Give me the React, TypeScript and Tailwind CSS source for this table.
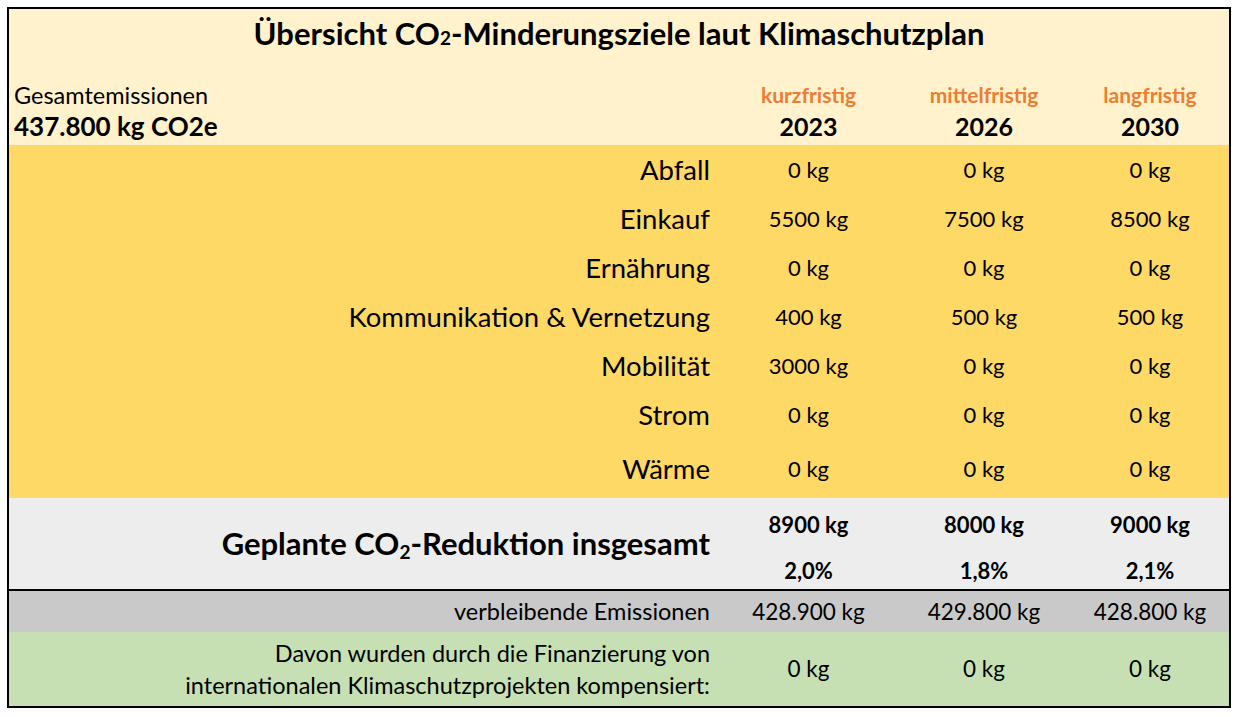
import React from "react";

const COLS = "grid grid-cols-[711px_177px_174px_158px]";

const rows = [
  { label: "Abfall", v: ["0 kg", "0 kg", "0 kg"], h: "h-[49px]" },
  { label: "Einkauf", v: ["5500 kg", "7500 kg", "8500 kg"], h: "h-[49px]" },
  { label: "Ernährung", v: ["0 kg", "0 kg", "0 kg"], h: "h-[49px]" },
  { label: "Kommunikation & Vernetzung", v: ["400 kg", "500 kg", "500 kg"], h: "h-[49px]" },
  { label: "Mobilität", v: ["3000 kg", "0 kg", "0 kg"], h: "h-[49px]" },
  { label: "Strom", v: ["0 kg", "0 kg", "0 kg"], h: "h-[49px]" },
  { label: "Wärme", v: ["0 kg", "0 kg", "0 kg"], h: "h-[59px]" },
];

const targets = [
  { term: "kurzfristig", year: "2023", kg: "8900 kg", pct: "2,0%", rest: "428.900 kg" },
  { term: "mittelfristig", year: "2026", kg: "8000 kg", pct: "1,8%", rest: "429.800 kg" },
  { term: "langfristig", year: "2030", kg: "9000 kg", pct: "2,1%", rest: "428.800 kg" },
];

export default function App() {
  return (
    <div className="min-h-screen bg-white pt-[7px] pl-[7px] text-black font-['Lato','Liberation_Sans',sans-serif]">
      <div className="w-[1224px] border-2 border-black">
        {/* Kopfbereich */}
        <div className="h-[136px] bg-[#fff2cc]">
          <h1 className="h-[49px] flex items-center justify-center text-[31px] font-bold">
            Übersicht CO<sub className="text-[19px] relative top-[4px] align-baseline">2</sub>-Minderungsziele laut Klimaschutzplan
          </h1>
          <div className={`${COLS} pt-[22px]`}>
            <div className="pl-[5px]">
              <div className="text-[23.5px] leading-[30px]">Gesamtemissionen</div>
              <div className="text-[26px] font-bold leading-[33px]">437.800 kg CO2e</div>
            </div>
            {targets.map((t) => (
              <div key={t.year} className="text-center">
                <div className="text-[21px] font-bold text-[#ed7d31] leading-[30px]">{t.term}</div>
                <div className="text-[25px] font-bold leading-[33px]">{t.year}</div>
              </div>
            ))}
          </div>
        </div>

        {/* Sektoren */}
        <div className="bg-[#ffd966]">
          {rows.map((r) => (
            <div key={r.label} className={`${COLS} ${r.h} items-center`}>
              <div className="text-right pr-[10px] text-[27.5px]">{r.label}</div>
              {r.v.map((v, i) => (
                <div key={i} className="text-center text-[22px]">{v}</div>
              ))}
            </div>
          ))}
        </div>

        {/* Summe */}
        <div className={`${COLS} h-[93px] bg-[#ededed] border-b-2 border-black`}>
          <div className="flex items-center justify-end pr-[10px] text-[31px] font-bold">
            <span>
              Geplante CO<sub className="text-[19px] relative top-[4px] align-baseline">2</sub>-Reduktion insgesamt
            </span>
          </div>
          {targets.map((t) => (
            <div key={t.year} className="flex flex-col items-center justify-between pt-[14px] pb-[5px] text-[22px] leading-[26px] font-bold">
              <div>{t.kg}</div>
              <div>{t.pct}</div>
            </div>
          ))}
        </div>

        {/* verbleibend */}
        <div className={`${COLS} h-[41px] bg-[#c9c9c9] items-center`}>
          <div className="text-right pr-[10px] text-[23.5px]">verbleibende Emissionen</div>
          {targets.map((t) => (
            <div key={t.year} className="text-center text-[22.5px]">{t.rest}</div>
          ))}
        </div>

        {/* Kompensation */}
        <div className={`${COLS} h-[74px] bg-[#c6e0b4] items-center`}>
          <div className="text-right pr-[10px] text-[23.5px] leading-[32px]">
            Davon wurden durch die Finanzierung von
            <br />
            internationalen Klimaschutzprojekten kompensiert:
          </div>
          {targets.map((t) => (
            <div key={t.year} className="text-center text-[22.5px]">0 kg</div>
          ))}
        </div>
      </div>
    </div>
  );
}
